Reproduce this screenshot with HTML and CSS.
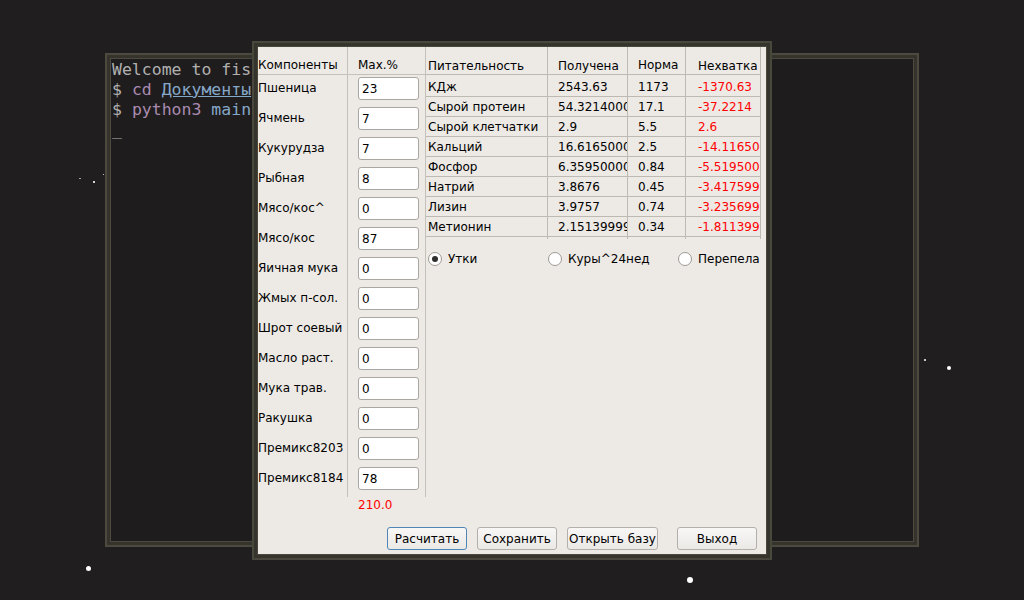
FILE: index.html
```html
<!DOCTYPE html>
<html lang="ru">
<head>
<meta charset="utf-8">
<title>Корма</title>
<link rel="stylesheet" href="styles.css">
</head>
<body>
<div class="desktop">
  <span class="star s1"></span>
  <span class="star s2"></span>
  <span class="star s3"></span>
  <span class="star s4"></span>
  <span class="star s5"></span>
  <span class="star s6"></span>
  <span class="star s7"></span>

  <div class="term-win">
    <div class="term">
      <div class="line">Welcome to fish, the friendly interactive shell</div>
      <div class="line">$ <span class="cmd">cd</span> <span class="path">Документы</span></div>
      <div class="line">$ <span class="cmd">python3</span> <span class="arg">main.py</span></div>
      <div class="line">_</div>
    </div>
  </div>

  <div class="dialog">
    <div class="dlg-body">
      <div class="top">
        <div class="ltable">
          <div class="lh c1">Компоненты</div>
          <div class="lh c2">Max.%</div>
          <div class="lc c1">Пшеница</div><div class="lc c2"><div class="inp">23</div></div>
          <div class="lc c1">Ячмень</div><div class="lc c2"><div class="inp">7</div></div>
          <div class="lc c1">Кукурудза</div><div class="lc c2"><div class="inp">7</div></div>
          <div class="lc c1">Рыбная</div><div class="lc c2"><div class="inp">8</div></div>
          <div class="lc c1">Мясо/кос^</div><div class="lc c2"><div class="inp">0</div></div>
          <div class="lc c1">Мясо/кос</div><div class="lc c2"><div class="inp">87</div></div>
          <div class="lc c1">Яичная мука</div><div class="lc c2"><div class="inp">0</div></div>
          <div class="lc c1">Жмых п-сол.</div><div class="lc c2"><div class="inp">0</div></div>
          <div class="lc c1">Шрот соевый</div><div class="lc c2"><div class="inp">0</div></div>
          <div class="lc c1">Масло раст.</div><div class="lc c2"><div class="inp">0</div></div>
          <div class="lc c1">Мука трав.</div><div class="lc c2"><div class="inp">0</div></div>
          <div class="lc c1">Ракушка</div><div class="lc c2"><div class="inp">0</div></div>
          <div class="lc c1">Премикс8203</div><div class="lc c2"><div class="inp">0</div></div>
          <div class="lc c1 last">Премикс8184</div><div class="lc c2 last"><div class="inp">78</div></div>
        </div>
        <div class="right">
          <div class="rtable">
            <div class="rh p1">Питательность</div>
            <div class="rh p2">Получена</div>
            <div class="rh p3 norm">Норма</div>
            <div class="rh p4">Нехватка</div>

            <div class="rc p1">КДж</div><div class="rc p2">2543.63</div><div class="rc p3">1173</div><div class="rc p4 red">-1370.63</div>
            <div class="rc p1">Сырой протеин</div><div class="rc p2">54.32140000000001</div><div class="rc p3">17.1</div><div class="rc p4 red">-37.2214</div>
            <div class="rc p1">Сырой клетчатки</div><div class="rc p2">2.9</div><div class="rc p3">5.5</div><div class="rc p4 red">2.6</div>
            <div class="rc p1">Кальций</div><div class="rc p2">16.616500000000002</div><div class="rc p3">2.5</div><div class="rc p4 red">-14.116500000000002</div>
            <div class="rc p1">Фосфор</div><div class="rc p2">6.359500000000001</div><div class="rc p3">0.84</div><div class="rc p4 red">-5.519500000000001</div>
            <div class="rc p1">Натрий</div><div class="rc p2">3.8676</div><div class="rc p3">0.45</div><div class="rc p4 red">-3.4175999999999997</div>
            <div class="rc p1">Лизин</div><div class="rc p2">3.9757</div><div class="rc p3">0.74</div><div class="rc p4 red">-3.2356999999999996</div>
            <div class="rc p1">Метионин</div><div class="rc p2">2.1513999999999998</div><div class="rc p3">0.34</div><div class="rc p4 red">-1.8113999999999997</div>
            <div class="rt"></div><div class="rt"></div><div class="rt"></div><div class="rt"></div>
          </div>
          <div class="radios">
            <label class="radio"><span class="dot on"></span>Утки</label>
            <label class="radio"><span class="dot"></span>Куры^24нед</label>
            <label class="radio"><span class="dot"></span>Перепела</label>
          </div>
        </div>
      </div>
      <div class="total">210.0</div>
      <div class="buttons">
        <button class="btn focus">Расчитать</button>
        <button class="btn">Сохранить</button>
        <button class="btn wide">Открыть базу</button>
        <button class="btn exit">Выход</button>
      </div>
    </div>
  </div>
</div>
</body>
</html>
```

FILE: styles.css
```css
html, body {
  margin: 0;
  padding: 0;
}
body {
  background: #211e1f;
  font-family: "DejaVu Sans", "Noto Sans", sans-serif;
}
.desktop {
  position: relative;
  width: 1024px;
  height: 600px;
  overflow: hidden;
  background: #211e1f;
}

/* stars */
.star {
  position: absolute;
  background: #ffffff;
  border-radius: 50%;
}
.s1 { left: 86px; top: 566px; width: 5px; height: 5px; }
.s2 { left: 687px; top: 577px; width: 6px; height: 6px; }
.s3 { left: 947px; top: 366px; width: 4px; height: 4px; }
.s4 { left: 924px; top: 359px; width: 2px; height: 2px; }
.s5 { left: 93px; top: 181px; width: 2px; height: 2px; border-radius: 0; opacity: .8; }
.s6 { left: 79px; top: 178px; width: 2px; height: 1px; border-radius: 0; opacity: .6; }
.s7 { left: 103px; top: 174px; width: 1px; height: 1px; border-radius: 0; opacity: .7; }

/* terminal window */
.term-win {
  position: absolute;
  left: 105px;
  top: 53px;
  width: 814px;
  height: 494px;
  box-sizing: border-box;
  border: 2px solid #4c4a3f;
  background: #35332c;
  padding: 3px;
}
.term {
  box-sizing: border-box;
  height: 100%;
  border: 1px solid #4c4a3f;
  background: #1f1c1d;
  padding: 1px 0 0 1px;
  font: 16.5px/20px "DejaVu Sans Mono", monospace;
  color: #b0b0b0;
  overflow: hidden;
  white-space: nowrap;
}
.cmd { color: #a98bb0; }
.path { color: #86a8c8; text-decoration: underline; }
.arg { color: #86a8c8; }

/* dialog window */
.dialog {
  position: absolute;
  left: 252px;
  top: 41px;
  width: 520px;
  height: 519px;
  box-sizing: border-box;
  border: 2px solid #4a483d;
  background: #36352d;
  padding: 3px;
}
.dlg-body {
  box-sizing: border-box;
  height: 100%;
  border: 1px solid #4a483d;
  background: #edeae6;
  display: flex;
  flex-direction: column;
  font-size: 12px;
  color: #000;
}
.top {
  display: flex;
  align-items: flex-start;
}

/* left table */
.ltable {
  display: grid;
  grid-template-columns: 90px 78px;
  grid-template-rows: 28px;
  grid-auto-rows: 30px;
  padding-bottom: 2px;
}
.ltable > div {
  box-sizing: border-box;
  border-right: 1px solid #c4c0ba;
}
.lh {
  display: flex;
  align-items: flex-end;
  padding-bottom: 2px;
  border-bottom: 1px solid #c4c0ba;
  white-space: nowrap;
}
.lh.c2 { padding-left: 10px; }
.lc.c1 {
  padding-top: 1px;
  line-height: 24px;
  white-space: nowrap;
}
.lc.c2 { padding: 2px 0 0 10px; }
.ltable > .last { height: 32px; }
.inp {
  box-sizing: border-box;
  width: 61px;
  height: 23px;
  border: 1px solid #aaa6a1;
  border-radius: 3px;
  background: #fff;
  padding-left: 3px;
  line-height: 22px;
}

/* right table */
.right {
  display: flex;
  flex-direction: column;
}
.rtable {
  display: grid;
  grid-template-columns: 122px 80px 58px 75px;
  grid-template-rows: 30px repeat(8, 20px) 2px;
}
.rtable > div {
  box-sizing: border-box;
  border-right: 1px solid #bdb9b3;
  white-space: nowrap;
  overflow: hidden;
}
.rh {
  display: flex;
  align-items: flex-end;
  padding-bottom: 4px;
  background: linear-gradient(#bdb9b3, #bdb9b3) no-repeat 0 27px / 100% 1px;
}
.rh.norm { padding-bottom: 5px; }
.rc {
  border-bottom: 1px solid #bdb9b3;
  padding-top: 1px;
  line-height: 18px;
}
.p1 { padding-left: 2px; }
.p2 { padding-left: 10px; }
.p3 { padding-left: 10px; }
.p4 { padding-left: 12px; }
.red { color: #ff0000; }

.radios {
  display: grid;
  grid-template-columns: 120px 130px 85px;
  margin-top: 12px;
  padding-left: 2px;
}
.radio {
  display: flex;
  align-items: center;
  gap: 6px;
  line-height: 16px;
  white-space: nowrap;
}
.dot {
  box-sizing: border-box;
  width: 14px;
  height: 14px;
  border: 1px solid #9d9a95;
  border-radius: 50%;
  background: #fff;
  display: flex;
  align-items: center;
  justify-content: center;
}
.dot.on::after {
  content: "";
  width: 6px;
  height: 6px;
  border-radius: 50%;
  background: #2e2e2e;
}

/* total */
.total {
  color: #ff0000;
  padding-left: 100px;
  padding-top: 1px;
  line-height: 15px;
  height: 15px;
}

/* buttons */
.buttons {
  display: flex;
  gap: 10px;
  padding-left: 129px;
  margin-top: 14px;
}
.btn {
  box-sizing: border-box;
  width: 80px;
  height: 23px;
  border: 1px solid #b3afaa;
  border-radius: 3px;
  background: linear-gradient(#f8f7f6, #ebe9e6);
  font: 12px "DejaVu Sans", sans-serif;
  color: #000;
  padding: 0;
  white-space: nowrap;
}
.btn.focus { border-color: #4f86b8; }
.btn.wide { width: 91px; }
.btn.exit { margin-left: 9px; }
```
